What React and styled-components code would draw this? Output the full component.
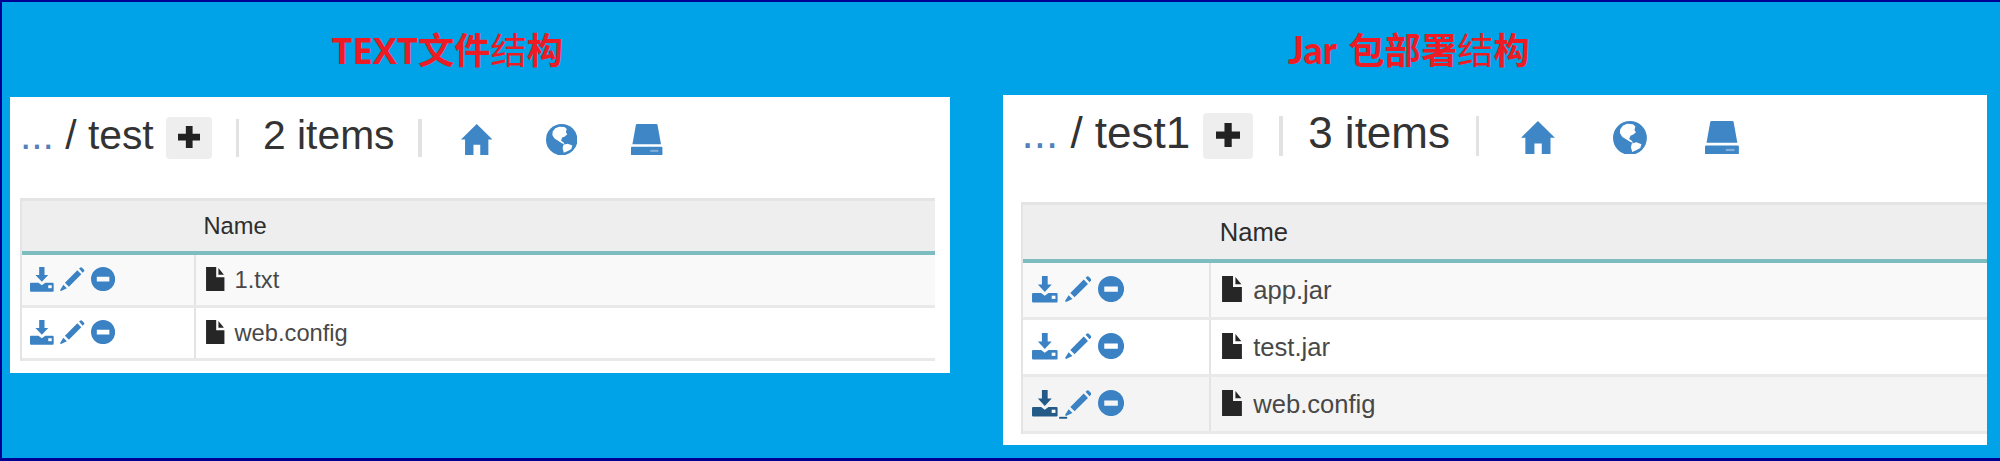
import React from "react";
import styled, { createGlobalStyle, css } from "styled-components";

const GlobalStyle = createGlobalStyle`
  * { box-sizing: border-box; }
  body { margin: 0; font-family: "Liberation Sans", Arial, sans-serif; }
`;

const Board = styled.main`
  width: 2000px;
  height: 461px;
  display: flex;
  align-items: flex-start;
  gap: 53px;
  padding-left: 8.4px;
  background: #00a2e8;
  border: solid #000093;
  border-width: 2px 0 3px 2px;
  overflow: hidden;
`;

const Column = styled.section`
  width: ${(p) => p.$width}px;
  flex: none;
`;

const Title = styled.h1`
  margin: 0;
  height: ${(p) => p.$height}px;
  padding: 23px 0 0 ${(p) => p.$indent}px;
  font: 700 36.3px/50px "Open Sans", "Noto Sans CJK SC", sans-serif;
  color: #ed1c24;
  white-space: nowrap;
`;

const Light = styled.span`
  font-weight: 400;
`;

const Latin = styled.span`
  font-family: Lato, "Open Sans", sans-serif;
  font-weight: 900;
  font-size: 37.5px;
  line-height: 1;
  margin-right: 2px;
`;

const Panel = styled.div`
  height: ${(p) => p.$height}px;
  padding-left: ${(p) => p.$inset}px;
  background: #fff;
  overflow: hidden;
`;

const Toolbar = styled.header`
  display: flex;
  align-items: center;
  height: 82px;
  margin-bottom: ${(p) => p.$gap}px;
  font-size: ${(p) => p.$size}px;
  color: #333;
  white-space: pre;
`;

const Label = styled.span`
  margin-bottom: 6px;
  line-height: 1.2;
`;

const Parent = styled.span`
  color: #5580bb;
`;

const AddButton = styled.button`
  display: flex;
  align-items: center;
  justify-content: center;
  width: 1.14em;
  height: 1.05em;
  margin-left: 0.29em;
  padding: 0 0 0.06em;
  border: 0;
  border-radius: 4px;
  background: #eee;
  color: #222;
  font-size: inherit;
`;

const Divider = styled.i`
  width: 0.09em;
  height: 0.92em;
  margin: 0 0.58em;
  background: #e2e2e2;
`;

const Links = styled.nav`
  display: flex;
  gap: 1.32em;
  margin: 3px 0 0 0.37em;
  color: #3f86c6;
`;

const Glyph = styled.svg`
  display: block;
  flex: none;
  width: ${(p) => p.$w}em;
  height: ${(p) => p.$h || p.$w}em;
  fill: currentColor;
`;

const Table = styled.div`
  width: ${(p) => p.$width}px;
  border-left: 2px solid #e4e4e4;
  font-size: ${(p) => p.$size}px;
`;

const rowGrid = css`
  display: grid;
  grid-template-columns: ${(p) => p.$action}px 1fr;
`;

const HeadRow = styled.div`
  ${rowGrid}
  height: ${(p) => p.$height}px;
  border-top: 3px solid #e4e4e4;
  border-bottom: 4px solid #7dbdbf;
  background: #eee;
  color: #2d2d2d;
`;

const HeadCell = styled.div`
  display: flex;
  align-items: center;
  padding: 1px 0 0 0.32em;
`;

const Row = styled.div`
  ${rowGrid}
  height: ${(p) => p.$height}px;
  border-bottom: 3px solid #e9e9e9;
  background: ${(p) => p.$bg};
  color: #484848;
`;

const Actions = styled.div`
  display: flex;
  align-items: center;
  gap: 0.27em;
  padding: 0 0 2px 0.34em;
  border-right: 2px solid #e4e4e4;
  color: #3a82c4;
`;

const Action = styled.span`
  color: ${(p) => (p.$hover ? "#245a88" : "inherit")};
`;

const FileName = styled.div`
  display: flex;
  align-items: center;
  gap: 0.42em;
  padding: 1px 0 0 0.43em;
`;

const FileMark = styled.span`
  margin-bottom: 3px;
  color: #262626;
`;

const Home = () => (
  <Glyph viewBox="0 0 31 31" $w={0.77}>
    <path d="M15.5 0 31 15.3H27V31H19V20.5H12.3V31H4V15.3H0Z" />
  </Glyph>
);

const Globe = () => (
  <Glyph viewBox="0 0 31 31" $w={0.77}>
    <circle cx="15.5" cy="15.5" r="15.5" />
    <path
      fill="#fff"
      d="M9.2 4.2 13 2.6 18.2 2.9 20.5 5 19.6 8.2 21 10.2 18.6 12.4 16 13.4 14.8 16.5 17.2 18 18.4 20.2 15.2 18.8 11.6 16.4 8.6 14.6 6.3 11 6.6 7.5ZM17.2 20.6 21.4 19.5 26 21.3 25 24.6 21.6 26.6 17.6 28.4 16.4 24Z"
    />
  </Glyph>
);

const Drive = () => (
  <Glyph viewBox="0 0 31 31" $w={0.77}>
    <path d="M6 0H25Q26 0 26.2 1L29.6 20H1.4L4.8 1Q5 0 6 0ZM1 22.5H30Q31 22.5 31 23.5V30Q31 31 30 31H1Q0 31 0 30V23.5Q0 22.5 1 22.5Z" />
    <path fill="#7fb0da" d="M19 25.5H27V27.5H19Z" />
  </Glyph>
);

const Plus = () => (
  <Glyph viewBox="0 0 22 22" $w={0.55}>
    <path d="M7.7 0H14.3V7.7H22V14.3H14.3V22H7.7V14.3H0V7.7H7.7Z" />
  </Glyph>
);

const Download = ({ active }) => (
  <Glyph viewBox="0 0 24 25" $w={1} $h={1.04} overflow="visible">
    <path d="M9.3 0H14.7V8H18.5L12 15 5.5 8H9.3Z" />
    <path d="M1 16H8.5L12 18.5 15.5 16H23Q24 16 24 17V24Q24 25 23 25H1Q0 25 0 24V17Q0 16 1 16Z" />
    <path fill="#fff" d="M18.5 18.5H22V21.5H18.5Z" />
    {active && <path d="M25.5 25.2H33V27H25.5Z" />}
  </Glyph>
);

const Pencil = () => (
  <Glyph viewBox="0 0 25 25" $w={1.04}>
    <path d="M19.3 1.6 20.8.5Q21.6 0 22.4.8L24.4 2.8Q25 3.6 24.4 4.4L23 5.8ZM17.6 3.4 21.6 7.4 9 20 5 16ZM3.4 18 7 21.6 1 24.4 0 23.6Z" />
  </Glyph>
);

const Remove = () => (
  <Glyph viewBox="0 0 25 25" $w={1.02}>
    <path
      fillRule="evenodd"
      d="M12.5 0A12.5 12.5 0 1 1 12.5 25A12.5 12.5 0 1 1 12.5 0ZM6 10V15H19V10Z"
    />
  </Glyph>
);

const File = () => (
  <Glyph viewBox="0 0 19 25" $w={0.78} $h={1.02}>
    <path d="M0 0H10.5V10.5H19V25H0ZM12.8 1 18.5 8H12.8Z" />
  </Glyph>
);

function Browser({ folder, files, size, gap, table }) {
  return (
    <>
      <Toolbar $size={size} $gap={gap}>
        <Label>
          <Parent>...</Parent> / {folder}
        </Label>
        <AddButton aria-label="Add">
          <Plus />
        </AddButton>
        <Divider />
        <Label>{files.length} items</Label>
        <Divider />
        <Links>
          <Home />
          <Globe />
          <Drive />
        </Links>
      </Toolbar>
      <Table $width={table.width} $size={table.size}>
        <HeadRow $height={table.head} $action={table.action}>
          <span />
          <HeadCell>Name</HeadCell>
        </HeadRow>
        {files.map((f) => (
          <Row key={f.name} $height={table.row} $action={table.action} $bg={f.bg}>
            <Actions>
              <Action $hover={f.hover}>
                <Download active={f.hover} />
              </Action>
              <Pencil />
              <Remove />
            </Actions>
            <FileName>
              <FileMark>
                <File />
              </FileMark>
              {f.name}
            </FileName>
          </Row>
        ))}
      </Table>
    </>
  );
}

export default function App() {
  return (
    <>
      <GlobalStyle />
      <Board>
        <Column $width={939.6}>
          <Title $height={95} $indent={321}>
            TEXT文件<Light>结</Light>构
          </Title>
          <Panel $height={275.5} $inset={9.5}>
            <Browser
              folder="test"
              size={40.8}
              gap={19}
              table={{ width: 915, size: 23.7, head: 57, row: 53, action: 174 }}
              files={[
                { name: "1.txt", bg: "#f9f9f9" },
                { name: "web.config", bg: "#fff" },
              ]}
            />
          </Panel>
        </Column>
        <Column $width={984}>
          <Title $height={93} $indent={285}>
            <Latin>Jar</Latin> 包部署<Light>结</Light>构
          </Title>
          <Panel $height={350} $inset={18.5}>
            <Browser
              folder="test1"
              size={44}
              gap={25}
              table={{ width: 966, size: 25.6, head: 61, row: 57, action: 188 }}
              files={[
                { name: "app.jar", bg: "#f9f9f9" },
                { name: "test.jar", bg: "#fff" },
                { name: "web.config", bg: "#f4f4f4", hover: true },
              ]}
            />
          </Panel>
        </Column>
      </Board>
    </>
  );
}
